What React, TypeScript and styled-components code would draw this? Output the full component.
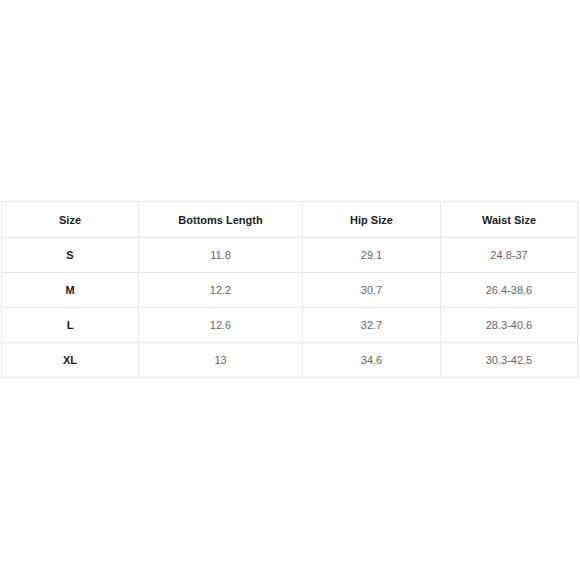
import styled, { createGlobalStyle } from 'styled-components';

const GlobalStyle = createGlobalStyle`
  body {
    margin: 0;
    background: #ffffff;
    font-family: "Liberation Sans", Arial, sans-serif;
  }
`;

const Page = styled.div`
  height: 580px;
  box-sizing: border-box;
  padding: 201px 0 0 1px;
  background: #ffffff;
`;

const Grid = styled.div`
  display: grid;
  grid-template-columns: 137px 164px 138px 137px;
  width: max-content;
  border-top: 1px solid #e8e8e8;
  border-left: 1px solid #e8e8e8;
`;

const Cell = styled.div<{ $head?: boolean; $bold?: boolean }>`
  box-sizing: border-box;
  height: ${(p) => (p.$head ? '36px' : '35px')};
  display: flex;
  align-items: center;
  justify-content: center;
  border-right: 1px solid #e8e8e8;
  border-bottom: 1px solid #e8e8e8;
  font-size: 11px;
  font-weight: ${(p) => (p.$bold ? 700 : 400)};
  color: ${(p) => (p.$bold ? '#1c1c1c' : '#666666')};
`;

const headers = ['Size', 'Bottoms Length', 'Hip Size', 'Waist Size'];

const rows = [
  ['S', '11.8', '29.1', '24.8-37'],
  ['M', '12.2', '30.7', '26.4-38.6'],
  ['L', '12.6', '32.7', '28.3-40.6'],
  ['XL', '13', '34.6', '30.3-42.5'],
];

export default function App() {
  return (
    <>
      <GlobalStyle />
      <Page>
        <Grid>
          {headers.map((h) => (
            <Cell key={h} $head $bold>
              {h}
            </Cell>
          ))}
          {rows.map((row) =>
            row.map((v, i) => (
              <Cell key={row[0] + i} $bold={i === 0}>
                {v}
              </Cell>
            ))
          )}
        </Grid>
      </Page>
    </>
  );
}
